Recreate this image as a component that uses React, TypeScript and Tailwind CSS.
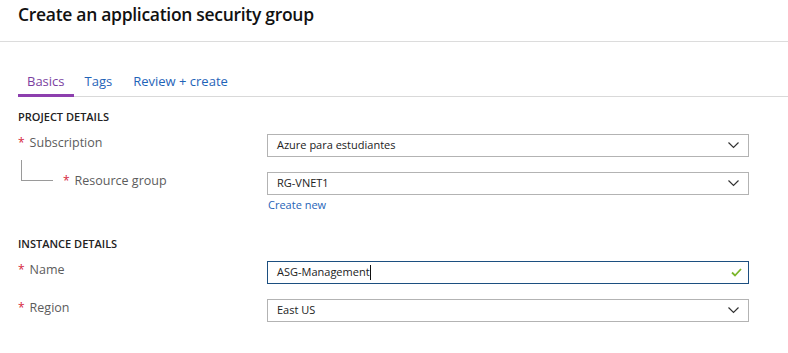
const font = { fontFamily: '"Open Sans", "Noto Sans", sans-serif' }

function Chevron() {
  return (
    <svg width="11" height="7" viewBox="0 0 11 7" className="shrink-0">
      <path d="M0.5 0.5 L5.5 5.5 L10.5 0.5" fill="none" stroke="#333" strokeWidth="1.2" />
    </svg>
  )
}

function Check() {
  return (
    <svg width="11" height="9" viewBox="0 0 11 9" className="shrink-0">
      <path d="M1 4.5 L4 7.5 L10 1" fill="none" stroke="#7bb62a" strokeWidth="1.8" />
    </svg>
  )
}

function Select({ value }: { value: string }) {
  return (
    <div className="w-[482px] h-[23px] border border-[#b3b3b3] bg-white flex items-center justify-between pl-[9px] pr-[9px]">
      <span className="text-[11px] text-[#222]">{value}</span>
      <Chevron />
    </div>
  )
}

function Label({ text, indent = false }: { text: string; indent?: boolean }) {
  return (
    <div className={"flex items-center gap-[5px] text-[12.5px] text-[#5c5c5c] " + (indent ? "pl-[45px]" : "")}>
      <span className="text-[#d6243a] text-[12px] leading-none">*</span>
      <span>{text}</span>
    </div>
  )
}

export default function App() {
  return (
    <div className="w-[788px] h-[353px] bg-white overflow-hidden" style={font}>
      {/* header */}
      <div className="h-[42px] border-b border-[#dcdcdc] pl-[18px]">
        <h1 className="text-[17.5px] font-semibold text-[#111] leading-[28px] tracking-[-0.3px]">Create an application security group</h1>
      </div>

      {/* tabs */}
      <div className="ml-[18px] mt-[30px] border-b border-[#d9d9d9] flex text-[13px]">
        <div className="px-[9px] pb-[2px] border-b-[3px] border-[#8d3fae] -mb-px text-[#7b3fa0]">Basics</div>
        <div className="px-[11px] pb-[2px] text-[#1f64b8]">Tags</div>
        <div className="px-[10px] pb-[2px] text-[#1f64b8]">Review + create</div>
      </div>

      <div className="pl-[18px]">
        <div className="mt-[12px] text-[11px] font-semibold text-[#222] leading-[16px]">PROJECT DETAILS</div>

        <div className="mt-[9px] flex items-start">
          <div className="w-[249px]">
            <Label text="Subscription" />
          </div>
          <Select value="Azure para estudiantes" />
        </div>

        <div className="mt-[15px] flex items-start">
          <div className="w-[249px] relative">
            <div className="absolute left-[3px] top-[-12px] w-[32px] h-[21px] border-l border-b border-[#9a9a9a]" />
            <Label text="Resource group" indent />
          </div>
          <div>
            <Select value="RG-VNET1" />
            <div className="text-[11px] text-[#1f64b8] mt-[2px] ml-px leading-[16px]">Create new</div>
          </div>
        </div>

        <div className="mt-[23px] text-[11px] font-semibold text-[#222] leading-[16px]">INSTANCE DETAILS</div>

        <div className="mt-[9px] flex items-start">
          <div className="w-[249px]">
            <Label text="Name" />
          </div>
          <div className="w-[482px] h-[23px] border border-[#1c4f80] bg-white flex items-center justify-between pl-[9px] pr-[6px]">
            <span className="text-[11px] text-[#222]">
              ASG-Management<span className="inline-block w-px h-[15px] bg-[#111] align-middle" />
            </span>
            <Check />
          </div>
        </div>

        <div className="mt-[15px] flex items-start">
          <div className="w-[249px]">
            <Label text="Region" />
          </div>
          <Select value="East US" />
        </div>
      </div>
    </div>
  )
}
